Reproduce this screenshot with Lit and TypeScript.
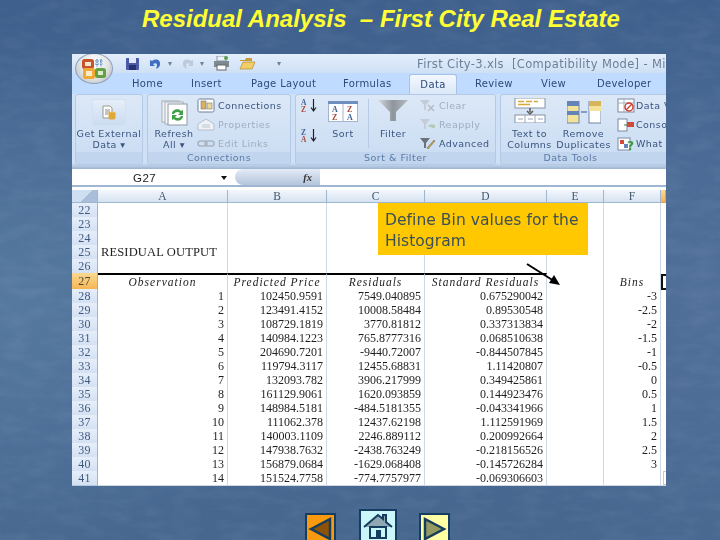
import { LitElement, html, css, svg } from "lit";
import { customElement } from "lit/decorators.js";

const DATA: string[][] = [
  ["1","102450.9591","7549.040895","0.675290042","-3"],
  ["2","123491.4152","10008.58484","0.89530548","-2.5"],
  ["3","108729.1819","3770.81812","0.337313834","-2"],
  ["4","140984.1223","765.8777316","0.068510638","-1.5"],
  ["5","204690.7201","-9440.72007","-0.844507845","-1"],
  ["6","119794.3117","12455.68831","1.11420807","-0.5"],
  ["7","132093.782","3906.217999","0.349425861","0"],
  ["8","161129.9061","1620.093859","0.144923476","0.5"],
  ["9","148984.5181","-484.5181355","-0.043341966","1"],
  ["10","111062.378","12437.62198","1.112591969","1.5"],
  ["11","140003.1109","2246.889112","0.200992664","2"],
  ["12","147938.7632","-2438.763249","-0.218156526","2.5"],
  ["13","156879.0684","-1629.068408","-0.145726284","3"],
  ["14","151524.7758","-774.7757977","-0.069306603",""],
];

const ico = (w: number, h: number, body: unknown) =>
  html`<svg width=${w} height=${h} viewBox="0 0 ${w} ${h}" style="display:block;flex:none">${body}</svg>`;

const saveI = ico(15, 14, svg`<rect x="1" y="1" width="13" height="12" rx="1" fill="#4a5aa8"/><rect x="4" y="1" width="7" height="5" fill="#dfe6f5"/><rect x="4" y="8" width="7" height="5" fill="#262f70"/>`);
const undoI = ico(13, 12, svg`<path d="M3 3C7 0 12 2 11 7 10.500 9 9 10 7 11 9 7 8 4 4 6L6 8 1 8 1 2Z" fill="#3f6fc0"/>`);
const redoI = ico(13, 12, svg`<path d="M10 3C6 0 1 2 2 7 2.500 9 4 10 6 11 4 7 5 4 9 6L7 8 12 8 12 2Z" fill="#bcc9da"/>`);
const printI = ico(17, 15, svg`<rect x="4" y="0" width="9" height="5" fill="#eef2f6" stroke="#8a98a8"/><rect x="1" y="5" width="15" height="6" fill="#7d8a92"/><rect x="4" y="9" width="9" height="5" fill="#fff" stroke="#666"/><circle cx="13" cy="2" r="2" fill="#5aa050"/>`);
const openI = ico(17, 15, svg`<path d="M1 4h5l1-2h6v3H1z" fill="#c99b36"/><path d="M1 13 4 6h12l-3 7z" fill="#f2cd68" stroke="#b58a2a" stroke-width=".7"/>`);
const dbI = ico(16, 16, svg`<path d="M2 1h7l2 2v10H2z" fill="#fff" stroke="#9a9a8a"/><path d="M4 5h5M4 7h5M4 9h3" stroke="#888"/><ellipse cx="11" cy="8" rx="3.500" ry="1.500" fill="#e8b84a"/><path d="M7.500 8v5c0 2 7 2 7 0V8" fill="#e0a838"/>`);
const refreshI = ico(27, 26, svg`<rect x="1" y="1" width="17" height="21" fill="#f1f3f6" stroke="#a6adb7"/><rect x="4" y="2" width="18" height="22" fill="#f7f8fa" stroke="#a6adb7"/><rect x="7" y="4" width="19" height="21" fill="#fff" stroke="#8e98a6"/><path d="M11 14c0-5 7-6 9-3l2-1v5h-5l2-2c-2-2-5-1-6 1zM22 16c0 5-7 6-9 3l-2 1v-5h5l-2 2c2 2 5 1 6-1z" fill="#3fa048"/>`);
const connI = ico(18, 15, svg`<rect x="1" y="1" width="16" height="13" rx="1.500" fill="#fff" stroke="#6f7f96"/><rect x="4" y="3" width="5" height="8" fill="#d7b45c" stroke="#777" stroke-width=".6"/><rect x="10" y="5" width="5" height="6" fill="#e9d89a" stroke="#777" stroke-width=".6"/>`);
const propI = ico(18, 13, svg`<path d="M1 6 9 1l8 5v6H1z" fill="#eef2f7" stroke="#b6bfcb"/><path d="M5 7h8M5 9h8" stroke="#c0c8d2"/>`);
const linkI = ico(18, 9, svg`<rect x="1" y="2" width="9" height="5" rx="2.500" fill="none" stroke="#aab3c0" stroke-width="1.500"/><rect x="8" y="2" width="9" height="5" rx="2.500" fill="none" stroke="#aab3c0" stroke-width="1.500"/>`);
const azI = (a: string, b: string) => ico(17, 15, svg`<text x="0" y="7" font-size="7.500" font-weight="700" font-family="Liberation Serif" fill="#3d5f96">${a}</text><text x="0" y="14" font-size="7.500" font-weight="700" font-family="Liberation Serif" fill="#a04a3a">${b}</text><path d="M12.500 1v11M10 9.500l2.500 3.500 2.500-3.500" fill="none" stroke="#222" stroke-width="1.200"/>`);
const sortI = ico(30, 21, svg`<rect x="0.500" y="0.500" width="29" height="20" fill="#fff" stroke="#a3b4cc"/><rect x="0" y="0" width="30" height="3" fill="#6f8fc0"/><path d="M15 3v18" stroke="#a3b4cc"/><text x="4" y="11" font-size="8" font-weight="700" font-family="Liberation Serif" fill="#3d5f96">A</text><text x="4" y="19" font-size="8" font-weight="700" font-family="Liberation Serif" fill="#a04a3a">Z</text><text x="19" y="11" font-size="8" font-weight="700" font-family="Liberation Serif" fill="#a04a3a">Z</text><text x="19" y="19" font-size="8" font-weight="700" font-family="Liberation Serif" fill="#3d5f96">A</text>`);
const funnelBig = ico(32, 23, svg`<defs><linearGradient id="fg" x1="0" x2="1"><stop offset="0" stop-color="#d5d9de"/><stop offset=".5" stop-color="#8e959c"/><stop offset="1" stop-color="#b4bac0"/></linearGradient></defs><path d="M1 1h30L19 13v9h-6v-9z" fill="url(#fg)"/>`);
const clearI = ico(17, 13, svg`<path d="M1 1h10L7 6v5H5V6z" fill="#c4ccd6"/><path d="M9 6l6 6M15 6l-6 6" stroke="#b5bcc6" stroke-width="1.500"/>`);
const reapplyI = ico(17, 13, svg`<path d="M1 1h10L7 6v5H5V6z" fill="#c4ccd6"/><path d="M9 9a4 4 0 0 1 6-2l1-1v4h-4l1-1" fill="#b5cbb5"/>`);
const advI = ico(17, 13, svg`<path d="M1 1h10L7 6v5H5V6z" fill="#6b7278"/><path d="M8 11l7-8 1 1-7 8z" fill="#e0a838" stroke="#555" stroke-width=".5"/>`);
const ttcI = ico(32, 25, svg`<rect x="1" y="0" width="30" height="10" fill="#fff" stroke="#8792a3"/><path d="M4 3.500h6M12 3.500h6M20 3.500h4M4 6.500h12" stroke="#d6a93a" stroke-width="1.500"/><path d="M16 10v4M13 13l3 3 3-3" fill="none" stroke="#555" stroke-width="1.500"/><rect x="1" y="17" width="30" height="8" fill="#fff" stroke="#8792a3"/><path d="M11 17v8M21 17v8M4 21h5M14 21h5M24 21h5" stroke="#9aa7b8"/>`);
const rdI = ico(34, 24, svg`<rect x="0" y="0" width="12" height="22" fill="#f3e39a" stroke="#6f84a6"/><rect x="0" y="0" width="12" height="5" fill="#6484b8"/><rect x="0" y="10" width="12" height="4" fill="#6484b8"/><path d="M14 11h6" stroke="#6484b8" stroke-width="1.500"/><rect x="22" y="0" width="12" height="22" fill="#fff" stroke="#6f84a6"/><rect x="22" y="0" width="12" height="5" fill="#d6b45c"/><rect x="22" y="5" width="12" height="5" fill="#f3e39a"/>`);
const dvI = ico(18, 15, svg`<rect x="1" y="1" width="16" height="13" fill="#fff" stroke="#7a8aa0"/><path d="M1 5h16M7 1v13" stroke="#9fb0c4"/><circle cx="12" cy="9" r="4" fill="none" stroke="#d04030" stroke-width="1.500"/><path d="M9 12l6-6" stroke="#d04030" stroke-width="1.500"/>`);
const conI = ico(18, 15, svg`<rect x="1" y="2" width="9" height="12" fill="#fff" stroke="#7a8aa0"/><rect x="10" y="5" width="7" height="5" fill="#d04a3a"/><path d="M7 8h3" stroke="#3a7a3a"/>`);
const wiI = ico(18, 15, svg`<rect x="1" y="2" width="12" height="12" fill="#fff" stroke="#7a8aa0"/><rect x="3" y="4" width="4" height="4" fill="#d04a3a"/><rect x="7" y="8" width="4" height="4" fill="#6484b8"/><text x="10" y="14" font-size="12" font-weight="700" font-family="DejaVu Sans" fill="#3a9a3a">?</text>`);
const officeLogo = ico(26, 22, svg`<rect x="1" y="1" width="12" height="10" rx="2.500" fill="#c4552a"/><rect x="4" y="4" width="6" height="4" fill="#f3e7d0"/><rect x="2" y="10" width="12" height="11" rx="2.500" fill="#eeaa38"/><rect x="5" y="13" width="6" height="5" fill="#f8ecc8"/><rect x="14" y="10" width="11" height="10" rx="2.500" fill="#63a044"/><rect x="17" y="13" width="5" height="4" fill="#dfeccc"/><path d="M14 3h8M14 6h8M16 1v8M20 1v8" stroke="#4f82c0" stroke-width="1.200" stroke-dasharray="1.500 1"/>`);

@customElement("app-root")
export class AppRoot extends LitElement {
  static styles = css`
    :host { display: block; width: 720px; height: 540px; overflow: hidden; position: relative;
      background:
        radial-gradient(ellipse 300px 260px at 20px 300px, #56799f 0%, rgba(86,121,159,0) 100%),
        radial-gradient(ellipse 200px 300px at 710px 300px, #506f99 0%, rgba(80,111,153,0) 100%),
        linear-gradient(180deg, #3f608c 0%, #486a96 50%, #47678f 100%);
      font-family: "DejaVu Sans", sans-serif; }
    .texture { position: absolute; inset: 0; opacity: .09; pointer-events: none; }
    .slide { position: relative; display: flex; flex-direction: column; height: 540px; }
    h1 { margin: 0; height: 54px; flex: none; box-sizing: border-box; padding: 4px 0 0 142px;
      font: italic bold 24px/30px "Liberation Sans", sans-serif; color: #ffff33; white-space: pre; }
    .xl { position: relative; margin-left: 72px; width: 594px; height: 432px; flex: none; overflow: hidden;
      display: flex; flex-direction: column; background: #bfdbff; filter: blur(.35px); }

    .titlebar { height: 19px; flex: none; display: flex; align-items: center; padding-left: 53px;
      background: linear-gradient(180deg, #e3eefb, #cfe0f5); gap: 9px; }
    .titlebar .dd { color: #6f819a; font-size: 8px; width: 9px; }
    .wintitle { margin-left: 127px; font-size: 11.500px; color: #6d7f98; white-space: pre; letter-spacing: .35px; }
    .sp6 { margin-left: -3px; }
    .tabs { height: 21px; flex: none; display: grid;
      grid-template-columns: 60px 59px 60px 92px 66px 48px 18px 66px 56px 1fr;
      background: #bfdbff; font-size: 10px; color: #2d4a78; letter-spacing: .35px; }
    .tabs > span { display: flex; align-items: center; white-space: nowrap; }
    .tabs > span:first-child { grid-column: 2; }
    .tabs .sel { background: linear-gradient(180deg, #f3f8ff, #dbe8f8); border: 1px solid #a9c2e0; border-bottom: 0;
      border-radius: 3px 3px 0 0; justify-content: center; margin-top: 1px; color: #2d4a78; }
    .tabs .rev { grid-column: 8; }

    .ribbon { height: 75px; flex: none; display: flex; gap: 4px; padding: 0 0 4px 3px; box-sizing: border-box;
      background: linear-gradient(180deg, #cfe1f7 0%, #cfe1f7 92%, #9cb4d1 100%); }
    .grp { flex: none; display: flex; flex-direction: column; border: 1px solid #b3c9e4; border-radius: 3px;
      background: linear-gradient(180deg, #dce8f7, #c9dcf3); box-sizing: border-box; overflow: hidden; }
    .body { flex: 1; display: flex; min-height: 0; color: #3a5580; font-size: 9.500px; letter-spacing: .45px; }
    .lbl { height: 12px; flex: none; background: #c1d6ee; color: #5a7aa6; font-size: 9.500px; line-height: 12px;
      text-align: center; letter-spacing: .5px; white-space: nowrap; }
    .big { flex: none; display: flex; flex-direction: column; align-items: center; padding-top: 4px; text-align: center; line-height: 11px; white-space: nowrap; }
    .big .cap { margin-top: auto; padding-bottom: 2px; }
    .big .cap.one { padding-bottom: 13px; }
    .tile { width: 32px; height: 25px; display: flex; align-items: center; justify-content: center; border-radius: 3px;
      background: linear-gradient(180deg, #e6eef9, #cbdcf1); border: 1px solid #d2e0f1; }
    .col { flex: none; display: flex; flex-direction: column; justify-content: space-between; padding: 3px 0 1px; }
    .it { display: flex; align-items: center; gap: 3px; height: 15px; white-space: nowrap; }
    .dim { color: #9fadc0; }
    .sep { flex: none; width: 1px; background: #b7cbe4; margin: 4px 0; }
    .g1 { width: 68px; } .g1 .big { width: 66px; }
    .g2 { width: 144px; } .g2 .big { width: 52px; padding-top: 5px; } .g2 .col { margin-left: -3px; }
    .g3 { width: 201px; }
    .g3 .col { margin-left: 2px; }
    .g3 .col.azs { width: 22px; margin-left: 5px; padding: 3px 0 9px; }
    .g3 .s { width: 50px; margin-left: -5px; padding-top: 6px; } .g3 .f { width: 48px; }
    .g4 { width: 190px; }
    .g4 .t { width: 53px; margin-left: 2px; padding-top: 3px; } .g4 .r { width: 61px; margin-left: -3px; padding-top: 6px; }
    .g4 .col { margin-left: 3px; }
    .g4 .it { gap: 1px; }
    .g4 .lbl { padding-right: 49px; box-sizing: border-box; }

    .fbar { height: 18px; flex: none; display: flex; align-items: center; background: #fff;
      border-bottom: 2px solid #9fb6d2; box-sizing: border-box; font: 11.500px/14px "Liberation Sans", sans-serif; color: #1c1c1c; }
    .name { width: 149px; padding: 1px 0 0 61px; box-sizing: border-box; flex: none; letter-spacing: .5px; }
    .fdd { flex: none; width: 0; height: 0; border: 3px solid transparent; border-top: 4px solid #111; margin-top: 4px; }
    .pill { flex: none; width: 85px; height: 16px; margin-left: 8px; border-radius: 8px 0 0 8px; display: flex; justify-content: flex-end; align-items: center;
      background: linear-gradient(180deg, #e4ecf6, #b3c5dc); padding-right: 8px; box-sizing: border-box;
      font: italic bold 10.500px "Liberation Serif", serif; color: #333; }
    .gapbar { height: 3px; flex: none; background: #fff; }

    .row { display: grid; grid-template-columns: 26px 130px 99px 98px 122px 57px 57px 5px; height: 14px; flex: none;
      font: 12px/13px "Liberation Serif", serif; color: #1e1e1e; }
    .row > div { box-sizing: border-box; border-right: 1px solid #d0d7e5; border-bottom: 1px solid #d0d7e5; background: #fff;
      text-align: right; padding: 1px 3px 0 0; white-space: nowrap; overflow: visible; }
    .row > .rh { background: linear-gradient(180deg, #e6eefa, #d4e1f3); color: #40597e; text-align: center; padding: 1px 0 0; border-right: 1px solid #9eb6ce; border-bottom: 1px solid #b4c7dd; letter-spacing: .2px; }
    .row > .blank { border-right: 0; }
    .row.head { height: 13px; }
    .row.head > div { background: linear-gradient(180deg, #f3f7fc, #d6e2f1); border-color: #9eb6ce; text-align: center; padding: 0; color: #40566f; font-size: 11.500px; line-height: 12px; }
    .row.head > .corner { background: linear-gradient(135deg, #cfdff2 55%, #a9bfd9 55%); }
    .row.head > .gsel, .row > .rh.sel { background: linear-gradient(180deg, #fbd98f, #f6b556); color: #4a4a3a; border-color: #e2a44a; }
    .row > .txt { text-align: left; padding-left: 3px; letter-spacing: .15px; font-size: 12.500px; }
    .tall { height: 16px; }
    .tall > div { line-height: 13px; padding-top: 3px; }
    .tall > .th { border-top: 2px solid #000; border-bottom: 1px solid #000; font-style: italic; text-align: center; padding: 1px 0 0; letter-spacing: 1px; font-size: 11.500px; color: #222; line-height: 13px; }
    .tall > .bins { font-style: italic; text-align: center; padding: 3px 0 0; letter-spacing: 1px; font-size: 11.500px; color: #222; }
    .tall > .rh { padding-top: 2px; }

    .callout { position: absolute; left: 306px; top: 149px; width: 210px; height: 52px; background: #ffc800; box-sizing: border-box;
      padding: 7px 0 0 7px; font: 15.500px/21px "DejaVu Sans", sans-serif; color: #3c5058; letter-spacing: .05px; }
    .arrow { position: absolute; left: 450px; top: 205px; }
    .cursor { position: absolute; left: 589px; top: 220px; width: 8px; height: 16px; border: 2px solid #111; box-sizing: border-box; background: #fff; }
    .tiny { position: absolute; left: 591px; top: 417px; width: 6px; height: 14px; border: 1px solid #d9c9a2; box-sizing: border-box; }
    .office { position: absolute; left: 3px; top: -1px; width: 38px; height: 31px; border-radius: 50%;
      background: radial-gradient(ellipse at 50% 30%, #ffffff 0%, #e3e4e6 55%, #a9adb3 100%); border: 1px solid #8ea0b8;
      display: flex; align-items: center; justify-content: center; box-sizing: border-box; }

    .nav { display: flex; align-items: flex-start; margin-left: 305px; margin-top: 23px; gap: 0; }
    .btn { flex: none; box-sizing: border-box; border: 2px solid #143d60; display: flex; justify-content: center; align-items: center; }
    .back { width: 31px; height: 31px; margin-top: 4px; background: #f99a0e; }
    .home { width: 38px; height: 35px; margin-left: 23px; background: #cbf7fb; }
    .fwd { width: 31px; height: 31px; margin-top: 4px; margin-left: 22px; background: #ffffa3; }
  `;

  render() {
    const letters = ["A", "B", "C", "D", "E", "F"];
    const empty = (n: number) => html`<div class="row"><div class="rh">${n}</div>${letters.map(() => html`<div></div>`)}<div class="blank"></div></div>`;
    return html`
      <svg class="texture" width="720" height="540" aria-hidden="true">
        <filter id="mottle"><feTurbulence type="fractalNoise" baseFrequency=".035 .09" numOctaves="3" seed="4"/><feColorMatrix values="0 0 0 0 .75  0 0 0 0 .85  0 0 0 0 1  0 0 0 1.400 -.55"/></filter>
        <rect width="720" height="540" filter="url(#mottle)"/>
      </svg>
      <div class="slide">
        <h1>Residual Analysis  – First City Real Estate</h1>
        <div class="xl">
          <div class="titlebar">
            ${saveI}${undoI}<span class="dd sp6">▾</span>${redoI}<span class="dd sp6">▾</span>${printI}${openI}
            <span class="dd" style="margin-left:12px">▾</span>
            <span class="wintitle">First City-3.xls  [Compatibility Mode] - Mic</span>
          </div>
          <div class="tabs">
            <span>Home</span><span>Insert</span><span>Page Layout</span><span>Formulas</span>
            <span class="sel">Data</span><span class="rev">Review</span><span>View</span><span>Developer</span>
          </div>
          <div class="ribbon">
            <div class="grp g1">
              <div class="body"><div class="big"><div class="tile">${dbI}</div><div class="cap">Get External<br>Data ▾</div></div></div>
              <div class="lbl"></div>
            </div>
            <div class="grp g2">
              <div class="body">
                <div class="big">${refreshI}<div class="cap">Refresh<br>All ▾</div></div>
                <div class="col">
                  <div class="it">${connI}Connections</div>
                  <div class="it dim">${propI}Properties</div>
                  <div class="it dim">${linkI}Edit Links</div>
                </div>
              </div>
              <div class="lbl">Connections</div>
            </div>
            <div class="grp g3">
              <div class="body">
                <div class="col azs">${azI("A", "Z")}${azI("Z", "A")}</div>
                <div class="big s">${sortI}<div class="cap one">Sort</div></div>
                <div class="sep"></div>
                <div class="big f">${funnelBig}<div class="cap one">Filter</div></div>
                <div class="col">
                  <div class="it dim">${clearI}Clear</div>
                  <div class="it dim">${reapplyI}Reapply</div>
                  <div class="it">${advI}Advanced</div>
                </div>
              </div>
              <div class="lbl">Sort &amp; Filter</div>
            </div>
            <div class="grp g4">
              <div class="body">
                <div class="big t">${ttcI}<div class="cap">Text to<br>Columns</div></div>
                <div class="big r">${rdI}<div class="cap">Remove<br>Duplicates</div></div>
                <div class="col">
                  <div class="it">${dvI}Data V</div>
                  <div class="it">${conI}Conso</div>
                  <div class="it">${wiI}What</div>
                </div>
              </div>
              <div class="lbl">Data Tools</div>
            </div>
          </div>
          <div class="fbar"><div class="name">G27</div><div class="fdd"></div><div class="pill">fx</div></div>
          <div class="gapbar"></div>

          <div class="row head"><div class="corner"></div>${letters.map((l) => html`<div>${l}</div>`)}<div class="gsel"></div></div>
          ${empty(22)}${empty(23)}${empty(24)}
          <div class="row"><div class="rh">25</div><div class="txt">RESIDUAL OUTPUT</div>${letters.slice(1).map(() => html`<div></div>`)}<div class="blank"></div></div>
          ${empty(26)}
          <div class="row tall">
            <div class="rh sel">27</div>
            <div class="th">Observation</div><div class="th">Predicted Price</div><div class="th">Residuals</div><div class="th">Standard Residuals</div>
            <div></div><div class="bins">Bins</div><div class="blank"></div>
          </div>
          ${DATA.map((r, i) => html`<div class="row">
            <div class="rh">${28 + i}</div>
            <div>${r[0]}</div><div>${r[1]}</div><div>${r[2]}</div><div>${r[3]}</div><div></div><div>${r[4]}</div><div class="blank"></div>
          </div>`)}

          <div class="office">${officeLogo}</div>
          <div class="callout">Define Bin values for the<br>Histogram</div>
          <svg class="arrow" width="42" height="30" viewBox="0 0 42 30"><path d="M5 5 32 22" stroke="#000" stroke-width="2"/><path d="M38 26 27 24 32 16z" fill="#000"/></svg>
          <div class="cursor"></div>
          <div class="tiny"></div>
        </div>
        <div class="nav">
          <div class="btn back"><svg width="27" height="25" viewBox="0 0 27 25"><path d="M4 13 23 3V23Z" fill="#8c5208" stroke="#143d60" stroke-width="2.500"/></svg></div>
          <div class="btn home"><svg width="30" height="29" viewBox="0 0 30 29"><path d="M1 15 15 3l5 4V3h3v7l6 5" fill="#8fa8b3" stroke="#143d60" stroke-width="2"/><rect x="7" y="15" width="16" height="11" fill="#cbf7fb" stroke="#143d60" stroke-width="2"/><rect x="13" y="18" width="5" height="8" fill="#143d60"/></svg></div>
          <div class="btn fwd"><svg width="27" height="25" viewBox="0 0 27 25"><path d="M23 13 4 3V23Z" fill="#959a60" stroke="#143d60" stroke-width="2.500"/></svg></div>
        </div>
      </div>
    `;
  }
}
